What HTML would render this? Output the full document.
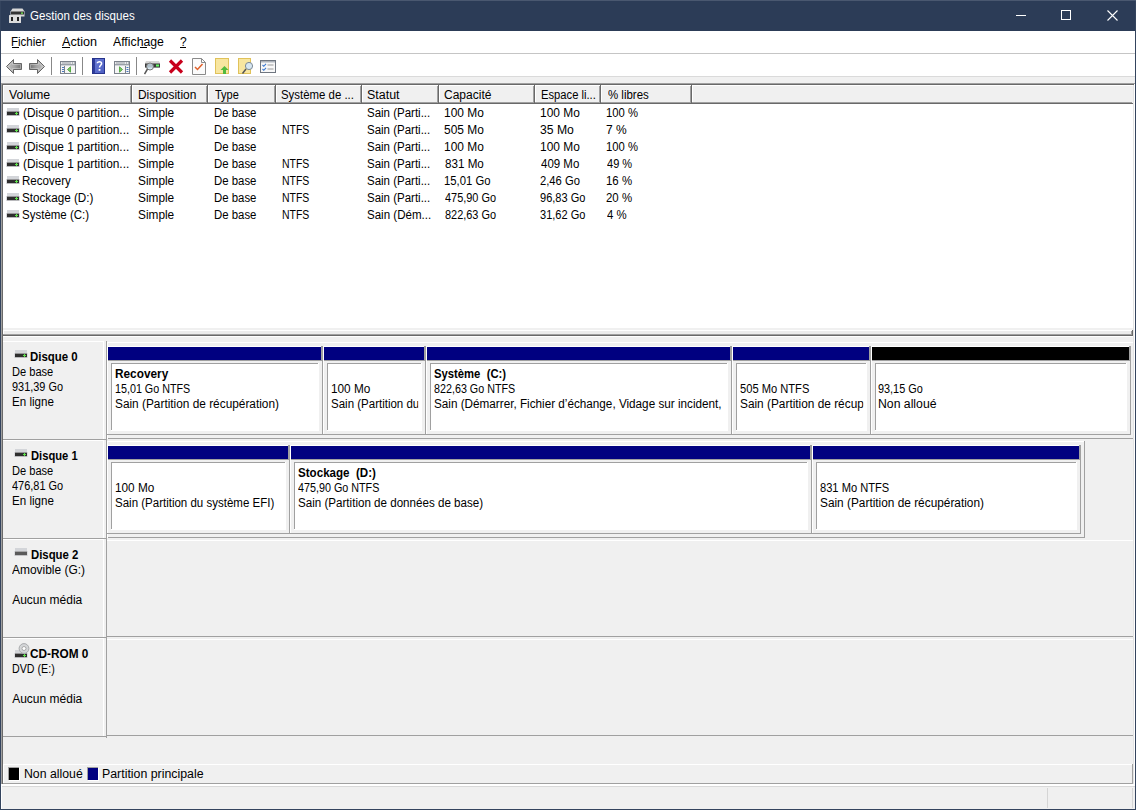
<!DOCTYPE html>
<html><head><meta charset="utf-8"><title>Gestion des disques</title>
<style>
html,body{margin:0;padding:0;}
body{width:1136px;height:810px;overflow:hidden;position:relative;background:#f0f0f0;font-family:"Liberation Sans",sans-serif;font-size:12px;}
body>div,body>svg{position:absolute;}
.t{line-height:15px;white-space:nowrap;}

</style></head><body>
<div style="left:0px;top:0px;width:1136px;height:810px;background:#f0f0f0;"></div>
<div style="left:0px;top:0px;width:1136px;height:31px;background:#2c3c57;"></div>
<div style="left:0px;top:0px;width:1136px;height:1px;background:#4a5870;"></div>
<div class="t" style="left:29.84px;top:9.10px;color:#fff;transform-origin:0 0;transform:scaleX(0.9626);">Gestion des disques</div>
<svg style="left:9px;top:8px" width="17" height="16" viewBox="0 0 17 16">
<path d="M3.5 0.5h10l2 3v5h-14v-5z" fill="#d8d8d8"/>
<rect x="2" y="3.5" width="13" height="3" fill="#333"/>
<rect x="12" y="4.5" width="2" height="1.2" fill="#7f5"/>
<rect x="0" y="7" width="12" height="8" rx="0.5" fill="#dcdcdc"/>
<rect x="2" y="9" width="2" height="4" fill="#222"/>
<rect x="8" y="9" width="2" height="4" fill="#222"/>
</svg>
<div style="left:1016px;top:15px;width:10px;height:1px;background:#fff;"></div>
<div style="left:1061px;top:10px;width:8px;height:8px;border:1px solid #fff"></div>
<svg style="left:1107px;top:10px" width="11" height="11" viewBox="0 0 11 11"><path d="M0.5 0.5L10.5 10.5M10.5 0.5L0.5 10.5" stroke="#fff" stroke-width="1.1"/></svg>
<div style="left:0px;top:0px;width:1px;height:810px;background:#34445e;"></div>
<div style="left:1135px;top:0px;width:1px;height:810px;background:#34445e;"></div>
<div style="left:0px;top:809px;width:1136px;height:1px;background:#34445e;"></div>
<div style="left:0px;top:0px;width:1136px;height:1px;background:#4a5870;"></div>
<div style="left:1px;top:31px;width:1134px;height:22px;background:#fff;"></div>
<div style="left:1px;top:53px;width:1134px;height:1px;background:#c5c5c5;"></div>
<div class="t" style="left:10.82px;top:35.30px;color:#000;transform-origin:0 0;transform:scaleX(0.9611);">Fichier</div>
<div class="t" style="left:61.90px;top:35.30px;color:#000;transform-origin:0 0;transform:scaleX(1.0515);">Action</div>
<div class="t" style="left:112.79px;top:35.30px;color:#000;transform-origin:0 0;transform:scaleX(1.0224);">Affichage</div>
<div class="t" style="left:180.00px;top:35.30px;color:#000;">?</div>
<div style="left:12px;top:47px;width:7px;height:1px;background:#000;"></div>
<div style="left:62px;top:47px;width:8px;height:1px;background:#000;"></div>
<div style="left:140px;top:47px;width:7px;height:1px;background:#000;"></div>
<div style="left:180px;top:47px;width:6px;height:1px;background:#000;"></div>
<div style="left:1px;top:54px;width:1134px;height:22px;background:#fff;"></div>
<div style="left:1px;top:76px;width:1134px;height:1px;background:#dadada;"></div>
<div style="left:51px;top:57px;width:1px;height:18px;background:#888;"></div>
<div style="left:82px;top:57px;width:1px;height:18px;background:#888;"></div>
<div style="left:136px;top:57px;width:1px;height:18px;background:#888;"></div>
<svg style="left:5px;top:58px" width="18" height="17" viewBox="0 0 18 17">
<defs><linearGradient id="ga" x1="0" y1="0" x2="1" y2="0"><stop offset="0" stop-color="#c4c4c4"/><stop offset="0.55" stop-color="#a2a2a2"/><stop offset="1" stop-color="#707070"/></linearGradient>
<linearGradient id="gb" x1="1" y1="0" x2="0" y2="0"><stop offset="0" stop-color="#c4c4c4"/><stop offset="0.55" stop-color="#a2a2a2"/><stop offset="1" stop-color="#707070"/></linearGradient></defs>
<path d="M1.5 8.5L8.5 1.5V5.5H16.5V11.5H8.5V15.5Z" fill="url(#ga)" stroke="#666" stroke-width="1"/>
<path d="M3.2 8.5L7.5 4.2V6.5H15.5V10.5H7.5V12.8Z" fill="none" stroke="#dcdcdc" stroke-width="0.6" stroke-opacity="0.8"/></svg>
<svg style="left:28px;top:58px" width="18" height="17" viewBox="0 0 18 17">
<path d="M16.5 8.5L9.5 1.5V5.5H1.5V11.5H9.5V15.5Z" fill="url(#gb)" stroke="#666" stroke-width="1"/>
<path d="M14.8 8.5L10.5 4.2V6.5H2.5V10.5H10.5V12.8Z" fill="none" stroke="#dcdcdc" stroke-width="0.6" stroke-opacity="0.8"/></svg>
<svg style="left:60px;top:61px" width="16" height="13" viewBox="0 0 16 13"><rect x="0.5" y="0.5" width="15" height="12" fill="#f6f6f6" stroke="#7d838c"/><rect x="1" y="1" width="14" height="2" fill="#e8e9eb"/><rect x="2" y="1.5" width="9" height="1" fill="#9aa0a8"/><rect x="12" y="1.5" width="1" height="1" fill="#7d838c"/><rect x="14" y="1.5" width="1" height="1" fill="#7d838c"/><line x1="1" y1="3.5" x2="15" y2="3.5" stroke="#9aa0a8"/><line x1="1" y1="4.5" x2="15" y2="4.5" stroke="#d0d3d8"/><line x1="4.5" y1="5" x2="4.5" y2="12" stroke="#7d838c"/><rect x="2" y="6" width="2" height="1" fill="#4a78c0"/><rect x="2" y="8" width="2" height="1" fill="#4a78c0"/><rect x="2" y="10" width="2" height="1" fill="#4a78c0"/><path d="M7.5 8.5L10.5 5.8V11.2Z" fill="#7cc46a" stroke="#3fa02c" stroke-width="0.8"/></svg>
<svg style="left:114px;top:61px" width="16" height="13" viewBox="0 0 16 13"><rect x="0.5" y="0.5" width="15" height="12" fill="#f6f6f6" stroke="#7d838c"/><rect x="1" y="1" width="14" height="2" fill="#e8e9eb"/><rect x="2" y="1.5" width="9" height="1" fill="#9aa0a8"/><rect x="12" y="1.5" width="1" height="1" fill="#7d838c"/><rect x="14" y="1.5" width="1" height="1" fill="#7d838c"/><line x1="1" y1="3.5" x2="15" y2="3.5" stroke="#9aa0a8"/><line x1="1" y1="4.5" x2="15" y2="4.5" stroke="#d0d3d8"/><line x1="11.5" y1="5" x2="11.5" y2="12" stroke="#7d838c"/><rect x="12.5" y="6" width="2" height="1" fill="#4a78c0"/><rect x="12.5" y="8" width="2" height="1" fill="#4a78c0"/><rect x="12.5" y="10" width="2" height="1" fill="#4a78c0"/><path d="M8.5 8.5L5.5 5.8V11.2Z" fill="#7cc46a" stroke="#3fa02c" stroke-width="0.8"/></svg>
<svg style="left:92px;top:58px" width="13" height="16" viewBox="0 0 13 16">
<defs><linearGradient id="gh" x1="0" y1="0" x2="1" y2="1"><stop offset="0" stop-color="#6d7fd8"/><stop offset="1" stop-color="#4a5cc0"/></linearGradient></defs>
<rect x="0" y="0" width="13" height="16" fill="url(#gh)"/><rect x="0" y="0" width="3" height="16" fill="#2e3c9a"/><rect x="0.5" y="0.5" width="12" height="15" fill="none" stroke="#26338c"/>
<path d="M5.3 5.2C5.3 3.2 9.6 3.2 9.6 5.4C9.6 7.2 7.5 7.4 7.5 9.6" fill="none" stroke="#fff" stroke-width="1.5"/><rect x="6.6" y="11" width="1.8" height="1.8" fill="#fff"/></svg>
<svg style="left:144px;top:60px" width="17" height="15" viewBox="0 0 17 15">
<path d="M2 1h13l1 2v5h-15v-5z" fill="#d6d6d6"/><rect x="1" y="3.5" width="15" height="4" fill="#3a3a3a"/><rect x="12" y="4.5" width="3" height="2" fill="#6f6"/>
<circle cx="6" cy="6.5" r="3.5" fill="#cfe3f0" fill-opacity="0.8" stroke="#777" stroke-width="1"/><path d="M3.5 9L0.5 14" stroke="#555" stroke-width="1.5"/></svg>
<svg style="left:168px;top:59px" width="16" height="15" viewBox="0 0 16 15"><path d="M2 1.5L14 13.5M14 1.5L2 13.5" stroke="#c8001c" stroke-width="3.2"/></svg>
<svg style="left:192px;top:58px" width="14" height="17" viewBox="0 0 14 17"><path d="M0.5 0.5H9.5L13.5 4.5V16.5H0.5Z" fill="#fbfbfb" stroke="#8a8a8a"/><path d="M9.5 0.5V4.5H13.5" fill="none" stroke="#8a8a8a"/><path d="M3 9L5.5 11.5L10.5 6" fill="none" stroke="#e0602a" stroke-width="1.5"/></svg>
<svg style="left:215px;top:58px" width="15" height="17" viewBox="0 0 15 17"><rect x="0.5" y="0.5" width="13" height="15" fill="#f8e6a0" stroke="#e0c25a"/><path d="M9.5 8L13.5 12H11V16H8V12H5.5Z" fill="#52ba3e"/></svg>
<svg style="left:238px;top:58px" width="16" height="17" viewBox="0 0 16 17"><rect x="0.5" y="0.5" width="12" height="15" fill="#f8e6a0" stroke="#e0c25a"/><circle cx="11" cy="8" r="3.6" fill="#d6e6f2" stroke="#7d8a96" stroke-width="1"/><path d="M8 11L4.5 15.5" stroke="#555" stroke-width="1.5"/></svg>
<svg style="left:260px;top:60px" width="16" height="13" viewBox="0 0 16 13"><rect x="0.5" y="0.5" width="15" height="12" fill="#f8f8f8" stroke="#6f7680"/><rect x="1" y="1" width="14" height="1.5" fill="#aeb4bc"/>
<path d="M2.5 5L3.8 6.3L6 3.8M2.5 9L3.8 10.3L6 7.8" fill="none" stroke="#3a78d0" stroke-width="1.1"/><rect x="7.5" y="4.5" width="6" height="1" fill="#999"/><rect x="7.5" y="8.5" width="6" height="1" fill="#999"/></svg>
<div style="left:1px;top:83px;width:1px;height:702px;background:#a0a0a0;"></div>
<div style="left:2px;top:84px;width:1px;height:700px;background:#696969;"></div>
<div style="left:1134px;top:83px;width:1px;height:702px;background:#fff;"></div>
<div style="left:1133px;top:84px;width:1px;height:700px;background:#e3e3e3;"></div>
<div style="left:1px;top:83px;width:1134px;height:1px;background:#a0a0a0;"></div>
<div style="left:2px;top:84px;width:1132px;height:1px;background:#696969;"></div>
<div style="left:3px;top:85px;width:1130px;height:243px;background:#fff;"></div>
<div style="left:3px;top:85px;width:129px;height:19px;background:#f0f0f0;"></div>
<div style="left:3px;top:85px;width:129px;height:1px;background:#fff;"></div>
<div style="left:3px;top:85px;width:1px;height:19px;background:#fff;"></div>
<div style="left:130px;top:86px;width:1px;height:17px;background:#a0a0a0;"></div>
<div style="left:131px;top:85px;width:1px;height:19px;background:#696969;"></div>
<div style="left:3px;top:102px;width:128px;height:1px;background:#a0a0a0;"></div>
<div style="left:3px;top:103px;width:129px;height:1px;background:#696969;"></div>
<div style="left:132px;top:85px;width:76px;height:19px;background:#f0f0f0;"></div>
<div style="left:132px;top:85px;width:76px;height:1px;background:#fff;"></div>
<div style="left:132px;top:85px;width:1px;height:19px;background:#fff;"></div>
<div style="left:206px;top:86px;width:1px;height:17px;background:#a0a0a0;"></div>
<div style="left:207px;top:85px;width:1px;height:19px;background:#696969;"></div>
<div style="left:132px;top:102px;width:75px;height:1px;background:#a0a0a0;"></div>
<div style="left:132px;top:103px;width:76px;height:1px;background:#696969;"></div>
<div style="left:208px;top:85px;width:68px;height:19px;background:#f0f0f0;"></div>
<div style="left:208px;top:85px;width:68px;height:1px;background:#fff;"></div>
<div style="left:208px;top:85px;width:1px;height:19px;background:#fff;"></div>
<div style="left:274px;top:86px;width:1px;height:17px;background:#a0a0a0;"></div>
<div style="left:275px;top:85px;width:1px;height:19px;background:#696969;"></div>
<div style="left:208px;top:102px;width:67px;height:1px;background:#a0a0a0;"></div>
<div style="left:208px;top:103px;width:68px;height:1px;background:#696969;"></div>
<div style="left:276px;top:85px;width:86px;height:19px;background:#f0f0f0;"></div>
<div style="left:276px;top:85px;width:86px;height:1px;background:#fff;"></div>
<div style="left:276px;top:85px;width:1px;height:19px;background:#fff;"></div>
<div style="left:360px;top:86px;width:1px;height:17px;background:#a0a0a0;"></div>
<div style="left:361px;top:85px;width:1px;height:19px;background:#696969;"></div>
<div style="left:276px;top:102px;width:85px;height:1px;background:#a0a0a0;"></div>
<div style="left:276px;top:103px;width:86px;height:1px;background:#696969;"></div>
<div style="left:362px;top:85px;width:77px;height:19px;background:#f0f0f0;"></div>
<div style="left:362px;top:85px;width:77px;height:1px;background:#fff;"></div>
<div style="left:362px;top:85px;width:1px;height:19px;background:#fff;"></div>
<div style="left:437px;top:86px;width:1px;height:17px;background:#a0a0a0;"></div>
<div style="left:438px;top:85px;width:1px;height:19px;background:#696969;"></div>
<div style="left:362px;top:102px;width:76px;height:1px;background:#a0a0a0;"></div>
<div style="left:362px;top:103px;width:77px;height:1px;background:#696969;"></div>
<div style="left:439px;top:85px;width:96px;height:19px;background:#f0f0f0;"></div>
<div style="left:439px;top:85px;width:96px;height:1px;background:#fff;"></div>
<div style="left:439px;top:85px;width:1px;height:19px;background:#fff;"></div>
<div style="left:533px;top:86px;width:1px;height:17px;background:#a0a0a0;"></div>
<div style="left:534px;top:85px;width:1px;height:19px;background:#696969;"></div>
<div style="left:439px;top:102px;width:95px;height:1px;background:#a0a0a0;"></div>
<div style="left:439px;top:103px;width:96px;height:1px;background:#696969;"></div>
<div style="left:535px;top:85px;width:66px;height:19px;background:#f0f0f0;"></div>
<div style="left:535px;top:85px;width:66px;height:1px;background:#fff;"></div>
<div style="left:535px;top:85px;width:1px;height:19px;background:#fff;"></div>
<div style="left:599px;top:86px;width:1px;height:17px;background:#a0a0a0;"></div>
<div style="left:600px;top:85px;width:1px;height:19px;background:#696969;"></div>
<div style="left:535px;top:102px;width:65px;height:1px;background:#a0a0a0;"></div>
<div style="left:535px;top:103px;width:66px;height:1px;background:#696969;"></div>
<div style="left:601px;top:85px;width:91px;height:19px;background:#f0f0f0;"></div>
<div style="left:601px;top:85px;width:91px;height:1px;background:#fff;"></div>
<div style="left:601px;top:85px;width:1px;height:19px;background:#fff;"></div>
<div style="left:690px;top:86px;width:1px;height:17px;background:#a0a0a0;"></div>
<div style="left:691px;top:85px;width:1px;height:19px;background:#696969;"></div>
<div style="left:601px;top:102px;width:90px;height:1px;background:#a0a0a0;"></div>
<div style="left:601px;top:103px;width:91px;height:1px;background:#696969;"></div>
<div style="left:692px;top:85px;width:441px;height:19px;background:#f0f0f0;"></div>
<div style="left:692px;top:85px;width:441px;height:1px;background:#fff;"></div>
<div style="left:692px;top:85px;width:1px;height:19px;background:#fff;"></div>
<div style="left:692px;top:102px;width:440px;height:1px;background:#a0a0a0;"></div>
<div style="left:692px;top:103px;width:441px;height:1px;background:#696969;"></div>
<div class="t" style="left:8.70px;top:88.10px;color:#000;transform-origin:0 0;transform:scaleX(1.0300);">Volume</div>
<div class="t" style="left:138.00px;top:88.10px;color:#000;transform-origin:0 0;transform:scaleX(0.9931);">Disposition</div>
<div class="t" style="left:215.00px;top:88.10px;color:#000;transform-origin:0 0;transform:scaleX(0.9154);">Type</div>
<div class="t" style="left:281.45px;top:88.10px;color:#000;transform-origin:0 0;transform:scaleX(0.9507);">Système de ...</div>
<div class="t" style="left:366.96px;top:88.10px;color:#000;transform-origin:0 0;transform:scaleX(1.0367);">Statut</div>
<div class="t" style="left:444.20px;top:88.10px;color:#000;transform-origin:0 0;transform:scaleX(1.0022);">Capacité</div>
<div class="t" style="left:540.67px;top:88.10px;color:#000;transform-origin:0 0;transform:scaleX(0.9333);">Espace li...</div>
<div class="t" style="left:607.50px;top:88.10px;color:#000;transform-origin:0 0;transform:scaleX(0.9548);">% libres</div>
<svg style="left:6px;top:108px" width="14" height="8" viewBox="0 0 14 8"><rect x="1" y="0" width="12" height="3" fill="#d3d5d9"/><rect x="0" y="3" width="14" height="5" fill="#dcdde0"/><rect x="1" y="3.6" width="12" height="3.6" fill="#2e2e2e"/><rect x="9" y="5" width="3" height="1" fill="#5ee04a"/><rect x="10" y="4" width="1" height="3" fill="#5ee04a"/></svg>
<div class="t" style="left:23.20px;top:106.10px;color:#000;transform-origin:0 0;transform:scaleX(0.9896);">(Disque 0 partition...</div>
<div class="t" style="left:138.01px;top:106.10px;color:#000;transform-origin:0 0;transform:scaleX(0.9861);">Simple</div>
<div class="t" style="left:213.55px;top:106.10px;color:#000;transform-origin:0 0;transform:scaleX(0.9488);">De base</div>
<div class="t" style="left:367.14px;top:106.10px;color:#000;transform-origin:0 0;transform:scaleX(0.9578);">Sain (Parti...</div>
<div class="t" style="left:443.81px;top:106.10px;color:#000;transform-origin:0 0;transform:scaleX(0.9949);">100 Mo</div>
<div class="t" style="left:540.11px;top:106.10px;color:#000;transform-origin:0 0;transform:scaleX(0.9949);">100 Mo</div>
<div class="t" style="left:605.96px;top:106.10px;color:#000;transform-origin:0 0;transform:scaleX(0.9394);">100 %</div>
<svg style="left:6px;top:125px" width="14" height="8" viewBox="0 0 14 8"><rect x="1" y="0" width="12" height="3" fill="#d3d5d9"/><rect x="0" y="3" width="14" height="5" fill="#dcdde0"/><rect x="1" y="3.6" width="12" height="3.6" fill="#2e2e2e"/><rect x="9" y="5" width="3" height="1" fill="#5ee04a"/><rect x="10" y="4" width="1" height="3" fill="#5ee04a"/></svg>
<div class="t" style="left:23.20px;top:123.10px;color:#000;transform-origin:0 0;transform:scaleX(0.9896);">(Disque 0 partition...</div>
<div class="t" style="left:138.01px;top:123.10px;color:#000;transform-origin:0 0;transform:scaleX(0.9861);">Simple</div>
<div class="t" style="left:213.55px;top:123.10px;color:#000;transform-origin:0 0;transform:scaleX(0.9488);">De base</div>
<div class="t" style="left:281.93px;top:123.10px;color:#000;transform-origin:0 0;transform:scaleX(0.8733);">NTFS</div>
<div class="t" style="left:367.14px;top:123.10px;color:#000;transform-origin:0 0;transform:scaleX(0.9578);">Sain (Parti...</div>
<div class="t" style="left:443.81px;top:123.10px;color:#000;transform-origin:0 0;transform:scaleX(0.9949);">505 Mo</div>
<div class="t" style="left:540.08px;top:123.10px;color:#000;transform-origin:0 0;transform:scaleX(1.0156);">35 Mo</div>
<div class="t" style="left:605.90px;top:123.10px;color:#000;transform-origin:0 0;transform:scaleX(1.0000);">7 %</div>
<svg style="left:6px;top:142px" width="14" height="8" viewBox="0 0 14 8"><rect x="1" y="0" width="12" height="3" fill="#d3d5d9"/><rect x="0" y="3" width="14" height="5" fill="#dcdde0"/><rect x="1" y="3.6" width="12" height="3.6" fill="#2e2e2e"/><rect x="9" y="5" width="3" height="1" fill="#5ee04a"/><rect x="10" y="4" width="1" height="3" fill="#5ee04a"/></svg>
<div class="t" style="left:23.20px;top:140.10px;color:#000;transform-origin:0 0;transform:scaleX(0.9896);">(Disque 1 partition...</div>
<div class="t" style="left:138.01px;top:140.10px;color:#000;transform-origin:0 0;transform:scaleX(0.9861);">Simple</div>
<div class="t" style="left:213.55px;top:140.10px;color:#000;transform-origin:0 0;transform:scaleX(0.9488);">De base</div>
<div class="t" style="left:367.14px;top:140.10px;color:#000;transform-origin:0 0;transform:scaleX(0.9578);">Sain (Parti...</div>
<div class="t" style="left:443.81px;top:140.10px;color:#000;transform-origin:0 0;transform:scaleX(0.9949);">100 Mo</div>
<div class="t" style="left:540.11px;top:140.10px;color:#000;transform-origin:0 0;transform:scaleX(0.9949);">100 Mo</div>
<div class="t" style="left:605.96px;top:140.10px;color:#000;transform-origin:0 0;transform:scaleX(0.9394);">100 %</div>
<svg style="left:6px;top:159px" width="14" height="8" viewBox="0 0 14 8"><rect x="1" y="0" width="12" height="3" fill="#d3d5d9"/><rect x="0" y="3" width="14" height="5" fill="#dcdde0"/><rect x="1" y="3.6" width="12" height="3.6" fill="#2e2e2e"/><rect x="9" y="5" width="3" height="1" fill="#5ee04a"/><rect x="10" y="4" width="1" height="3" fill="#5ee04a"/></svg>
<div class="t" style="left:23.20px;top:157.10px;color:#000;transform-origin:0 0;transform:scaleX(0.9896);">(Disque 1 partition...</div>
<div class="t" style="left:138.01px;top:157.10px;color:#000;transform-origin:0 0;transform:scaleX(0.9861);">Simple</div>
<div class="t" style="left:213.55px;top:157.10px;color:#000;transform-origin:0 0;transform:scaleX(0.9488);">De base</div>
<div class="t" style="left:281.93px;top:157.10px;color:#000;transform-origin:0 0;transform:scaleX(0.8733);">NTFS</div>
<div class="t" style="left:367.14px;top:157.10px;color:#000;transform-origin:0 0;transform:scaleX(0.9578);">Sain (Parti...</div>
<div class="t" style="left:444.80px;top:157.10px;color:#000;transform-origin:0 0;transform:scaleX(0.9700);">831 Mo</div>
<div class="t" style="left:541.10px;top:157.10px;color:#000;transform-origin:0 0;transform:scaleX(0.9575);">409 Mo</div>
<div class="t" style="left:606.90px;top:157.10px;color:#000;transform-origin:0 0;transform:scaleX(0.9185);">49 %</div>
<svg style="left:6px;top:176px" width="14" height="8" viewBox="0 0 14 8"><rect x="1" y="0" width="12" height="3" fill="#d3d5d9"/><rect x="0" y="3" width="14" height="5" fill="#dcdde0"/><rect x="1" y="3.6" width="12" height="3.6" fill="#2e2e2e"/><rect x="9" y="5" width="3" height="1" fill="#5ee04a"/><rect x="10" y="4" width="1" height="3" fill="#5ee04a"/></svg>
<div class="t" style="left:22.25px;top:174.10px;color:#000;transform-origin:0 0;transform:scaleX(0.9633);">Recovery</div>
<div class="t" style="left:138.01px;top:174.10px;color:#000;transform-origin:0 0;transform:scaleX(0.9861);">Simple</div>
<div class="t" style="left:213.55px;top:174.10px;color:#000;transform-origin:0 0;transform:scaleX(0.9488);">De base</div>
<div class="t" style="left:281.93px;top:174.10px;color:#000;transform-origin:0 0;transform:scaleX(0.8733);">NTFS</div>
<div class="t" style="left:367.14px;top:174.10px;color:#000;transform-origin:0 0;transform:scaleX(0.9578);">Sain (Parti...</div>
<div class="t" style="left:443.86px;top:174.10px;color:#000;transform-origin:0 0;transform:scaleX(0.9417);">15,01 Go</div>
<div class="t" style="left:540.17px;top:174.10px;color:#000;transform-origin:0 0;transform:scaleX(0.9341);">2,46 Go</div>
<div class="t" style="left:605.95px;top:174.10px;color:#000;transform-origin:0 0;transform:scaleX(0.9538);">16 %</div>
<svg style="left:6px;top:193px" width="14" height="8" viewBox="0 0 14 8"><rect x="1" y="0" width="12" height="3" fill="#d3d5d9"/><rect x="0" y="3" width="14" height="5" fill="#dcdde0"/><rect x="1" y="3.6" width="12" height="3.6" fill="#2e2e2e"/><rect x="9" y="5" width="3" height="1" fill="#5ee04a"/><rect x="10" y="4" width="1" height="3" fill="#5ee04a"/></svg>
<div class="t" style="left:22.23px;top:191.10px;color:#000;transform-origin:0 0;transform:scaleX(0.9732);">Stockage (D:)</div>
<div class="t" style="left:138.01px;top:191.10px;color:#000;transform-origin:0 0;transform:scaleX(0.9861);">Simple</div>
<div class="t" style="left:213.55px;top:191.10px;color:#000;transform-origin:0 0;transform:scaleX(0.9488);">De base</div>
<div class="t" style="left:281.93px;top:191.10px;color:#000;transform-origin:0 0;transform:scaleX(0.8733);">NTFS</div>
<div class="t" style="left:367.14px;top:191.10px;color:#000;transform-origin:0 0;transform:scaleX(0.9578);">Sain (Parti...</div>
<div class="t" style="left:444.80px;top:191.10px;color:#000;transform-origin:0 0;transform:scaleX(0.9107);">475,90 Go</div>
<div class="t" style="left:540.18px;top:191.10px;color:#000;transform-origin:0 0;transform:scaleX(0.9188);">96,83 Go</div>
<div class="t" style="left:605.95px;top:191.10px;color:#000;transform-origin:0 0;transform:scaleX(0.9538);">20 %</div>
<svg style="left:6px;top:210px" width="14" height="8" viewBox="0 0 14 8"><rect x="1" y="0" width="12" height="3" fill="#d3d5d9"/><rect x="0" y="3" width="14" height="5" fill="#dcdde0"/><rect x="1" y="3.6" width="12" height="3.6" fill="#2e2e2e"/><rect x="9" y="5" width="3" height="1" fill="#5ee04a"/><rect x="10" y="4" width="1" height="3" fill="#5ee04a"/></svg>
<div class="t" style="left:22.25px;top:208.10px;color:#000;transform-origin:0 0;transform:scaleX(0.9588);">Système (C:)</div>
<div class="t" style="left:138.01px;top:208.10px;color:#000;transform-origin:0 0;transform:scaleX(0.9861);">Simple</div>
<div class="t" style="left:213.55px;top:208.10px;color:#000;transform-origin:0 0;transform:scaleX(0.9488);">De base</div>
<div class="t" style="left:281.93px;top:208.10px;color:#000;transform-origin:0 0;transform:scaleX(0.8733);">NTFS</div>
<div class="t" style="left:367.14px;top:208.10px;color:#000;transform-origin:0 0;transform:scaleX(0.9615);">Sain (Dém...</div>
<div class="t" style="left:444.80px;top:208.10px;color:#000;transform-origin:0 0;transform:scaleX(0.9107);">822,63 Go</div>
<div class="t" style="left:540.18px;top:208.10px;color:#000;transform-origin:0 0;transform:scaleX(0.9188);">31,62 Go</div>
<div class="t" style="left:606.90px;top:208.10px;color:#000;transform-origin:0 0;transform:scaleX(0.9500);">4 %</div>
<div style="left:3px;top:328px;width:1130px;height:1px;background:#f0f0f0;"></div>
<div style="left:3px;top:329px;width:1130px;height:1px;background:#f0f0f0;"></div>
<div style="left:3px;top:330px;width:1130px;height:6px;background:#ececec;"></div>
<div style="left:3px;top:330px;width:1129px;height:1px;background:#fff;"></div>
<div style="left:3px;top:330px;width:1px;height:6px;background:#fff;"></div>
<div style="left:3px;top:334px;width:1130px;height:1px;background:#a0a0a0;"></div>
<div style="left:3px;top:335px;width:1130px;height:1px;background:#696969;"></div>
<div style="left:1132px;top:330px;width:1px;height:6px;background:#696969;"></div>
<div style="left:1131px;top:331px;width:1px;height:4px;background:#a0a0a0;"></div>
<div style="left:3px;top:336px;width:1130px;height:1px;background:#fff;"></div>
<div style="left:3px;top:341px;width:100px;height:1px;background:#fff;"></div>
<div style="left:103px;top:341px;width:1px;height:98px;background:#fff;"></div>
<div style="left:106px;top:341px;width:1px;height:100px;background:#a0a0a0;"></div>
<div style="left:3px;top:439px;width:103px;height:1px;background:#a0a0a0;"></div>
<div style="left:107px;top:342px;width:1026px;height:1px;background:#fff;"></div>
<div style="left:107px;top:438px;width:1026px;height:1px;background:#a0a0a0;"></div>
<svg style="left:14px;top:350px" width="14" height="8" viewBox="0 0 14 8"><rect x="1" y="0" width="12" height="3" fill="#d3d5d9"/><rect x="0" y="3" width="14" height="5" fill="#dcdde0"/><rect x="1" y="3.6" width="12" height="3.6" fill="#2e2e2e"/><rect x="9" y="5" width="3" height="1" fill="#5ee04a"/><rect x="10" y="4" width="1" height="3" fill="#5ee04a"/></svg>
<div class="t" style="left:30.02px;top:349.90px;color:#000;font-weight:bold;transform-origin:0 0;transform:scaleX(0.9531);">Disque 0</div>
<div class="t" style="left:12.23px;top:364.90px;color:#000;transform-origin:0 0;transform:scaleX(0.9227);">De base</div>
<div class="t" style="left:12.24px;top:379.90px;color:#000;transform-origin:0 0;transform:scaleX(0.9091);">931,39 Go</div>
<div class="t" style="left:12.21px;top:394.90px;color:#000;transform-origin:0 0;transform:scaleX(0.9651);">En ligne</div>
<div style="left:3px;top:440px;width:100px;height:1px;background:#fff;"></div>
<div style="left:103px;top:440px;width:1px;height:98px;background:#fff;"></div>
<div style="left:106px;top:440px;width:1px;height:100px;background:#a0a0a0;"></div>
<div style="left:3px;top:538px;width:103px;height:1px;background:#a0a0a0;"></div>
<div style="left:107px;top:441px;width:1026px;height:1px;background:#fff;"></div>
<div style="left:107px;top:537px;width:1026px;height:1px;background:#a0a0a0;"></div>
<svg style="left:14px;top:449px" width="14" height="8" viewBox="0 0 14 8"><rect x="1" y="0" width="12" height="3" fill="#d3d5d9"/><rect x="0" y="3" width="14" height="5" fill="#dcdde0"/><rect x="1" y="3.6" width="12" height="3.6" fill="#2e2e2e"/><rect x="9" y="5" width="3" height="1" fill="#5ee04a"/><rect x="10" y="4" width="1" height="3" fill="#5ee04a"/></svg>
<div class="t" style="left:30.53px;top:448.90px;color:#000;font-weight:bold;transform-origin:0 0;transform:scaleX(0.9327);">Disque 1</div>
<div class="t" style="left:12.23px;top:463.90px;color:#000;transform-origin:0 0;transform:scaleX(0.9227);">De base</div>
<div class="t" style="left:12.23px;top:478.90px;color:#000;transform-origin:0 0;transform:scaleX(0.9127);">476,81 Go</div>
<div class="t" style="left:12.21px;top:493.90px;color:#000;transform-origin:0 0;transform:scaleX(0.9651);">En ligne</div>
<div style="left:3px;top:539px;width:100px;height:1px;background:#fff;"></div>
<div style="left:103px;top:539px;width:1px;height:98px;background:#fff;"></div>
<div style="left:106px;top:539px;width:1px;height:100px;background:#a0a0a0;"></div>
<div style="left:3px;top:637px;width:103px;height:1px;background:#a0a0a0;"></div>
<div style="left:107px;top:540px;width:1026px;height:1px;background:#fff;"></div>
<div style="left:107px;top:636px;width:1026px;height:1px;background:#a0a0a0;"></div>
<svg style="left:14px;top:548px" width="14" height="8" viewBox="0 0 14 8"><rect x="1" y="0" width="12" height="3" fill="#d3d5d9"/><rect x="0" y="3" width="14" height="5" fill="#dcdde0"/><rect x="1" y="3.6" width="12" height="3.6" fill="#5a5a5a"/></svg>
<div class="t" style="left:30.53px;top:547.90px;color:#000;font-weight:bold;transform-origin:0 0;transform:scaleX(0.9469);">Disque 2</div>
<div class="t" style="left:12.20px;top:562.90px;color:#000;transform-origin:0 0;transform:scaleX(0.9958);">Amovible (G:)</div>
<div class="t" style="left:12.20px;top:592.90px;color:#000;transform-origin:0 0;transform:scaleX(1.0000);">Aucun média</div>
<div style="left:3px;top:638px;width:100px;height:1px;background:#fff;"></div>
<div style="left:103px;top:638px;width:1px;height:98px;background:#fff;"></div>
<div style="left:106px;top:638px;width:1px;height:100px;background:#a0a0a0;"></div>
<div style="left:3px;top:736px;width:103px;height:1px;background:#a0a0a0;"></div>
<div style="left:107px;top:639px;width:1026px;height:1px;background:#fff;"></div>
<div style="left:107px;top:735px;width:1026px;height:1px;background:#a0a0a0;"></div>
<svg style="left:14px;top:650px" width="14" height="8" viewBox="0 0 14 8"><rect x="1" y="0" width="12" height="3" fill="#d3d5d9"/><rect x="0" y="3" width="14" height="5" fill="#dcdde0"/><rect x="1" y="3.6" width="12" height="3.6" fill="#2e2e2e"/><rect x="9" y="5" width="3" height="1" fill="#5ee04a"/><rect x="10" y="4" width="1" height="3" fill="#5ee04a"/></svg>
<svg style="left:18px;top:643px" width="12" height="11" viewBox="0 0 12 11"><circle cx="6" cy="5.5" r="4.9" fill="#d4d6d8" stroke="#a9abad" stroke-width="1"/><circle cx="6" cy="5.5" r="2" fill="#fff" stroke="#9a9a9a" stroke-width="0.8"/></svg>
<div class="t" style="left:30.01px;top:646.90px;color:#000;font-weight:bold;transform-origin:0 0;transform:scaleX(0.9847);">CD-ROM 0</div>
<div class="t" style="left:12.24px;top:661.90px;color:#000;transform-origin:0 0;transform:scaleX(0.8894);">DVD (E:)</div>
<div class="t" style="left:12.20px;top:691.90px;color:#000;transform-origin:0 0;transform:scaleX(1.0000);">Aucun média</div>
<div style="left:107px;top:342px;width:1px;height:97px;background:#fff;"></div>
<div style="left:107px;top:441px;width:1px;height:97px;background:#fff;"></div>
<div style="left:1084px;top:441px;width:1px;height:97px;background:#a0a0a0;"></div>
<div style="left:1085px;top:537px;width:48px;height:1px;background:#f0f0f0;"></div>
<div style="left:1085px;top:441px;width:48px;height:1px;background:#f0f0f0;"></div>
<div style="left:107px;top:346px;width:215px;height:1px;background:#fff;"></div>
<div style="left:107px;top:346px;width:1px;height:88px;background:#fff;"></div>
<div style="left:108px;top:347px;width:213px;height:13px;background:#000080;"></div>
<div style="left:321px;top:346px;width:1px;height:15px;background:#a0a0a0;"></div>
<div style="left:108px;top:360px;width:214px;height:1px;background:#a0a0a0;"></div>
<div style="left:322px;top:346px;width:1px;height:89px;background:#a0a0a0;"></div>
<div style="left:107px;top:434px;width:216px;height:1px;background:#a0a0a0;"></div>
<div style="left:111px;top:363px;width:208px;height:68px;background:#fff;"></div>
<div style="left:111px;top:363px;width:207px;height:1px;background:#a0a0a0;"></div>
<div style="left:111px;top:363px;width:1px;height:67px;background:#a0a0a0;"></div>
<div class="t" style="left:114.91px;top:366.90px;color:#000;font-weight:bold;transform-origin:0 0;transform:scaleX(0.9849);width:203.1px;overflow:hidden;">Recovery</div>
<div class="t" style="left:114.95px;top:381.90px;color:#000;transform-origin:0 0;transform:scaleX(0.8952);width:223.4px;overflow:hidden;">15,01 Go NTFS</div>
<div class="t" style="left:114.91px;top:396.90px;color:#000;transform-origin:0 0;transform:scaleX(0.9873);width:202.6px;overflow:hidden;">Sain (Partition de récupération)</div>
<div style="left:323px;top:346px;width:102px;height:1px;background:#fff;"></div>
<div style="left:323px;top:346px;width:1px;height:88px;background:#fff;"></div>
<div style="left:324px;top:347px;width:100px;height:13px;background:#000080;"></div>
<div style="left:424px;top:346px;width:1px;height:15px;background:#a0a0a0;"></div>
<div style="left:324px;top:360px;width:101px;height:1px;background:#a0a0a0;"></div>
<div style="left:425px;top:346px;width:1px;height:89px;background:#a0a0a0;"></div>
<div style="left:323px;top:434px;width:103px;height:1px;background:#a0a0a0;"></div>
<div style="left:327px;top:363px;width:95px;height:68px;background:#fff;"></div>
<div style="left:327px;top:363px;width:94px;height:1px;background:#a0a0a0;"></div>
<div style="left:327px;top:363px;width:1px;height:67px;background:#a0a0a0;"></div>
<div class="t" style="left:331.01px;top:381.90px;color:#000;transform-origin:0 0;transform:scaleX(0.9821);width:88.6px;overflow:hidden;">100 Mo</div>
<div class="t" style="left:331.02px;top:396.90px;color:#000;transform-origin:0 0;transform:scaleX(0.9588);width:90.7px;overflow:hidden;">Sain (Partition du système EFI)</div>
<div style="left:426px;top:346px;width:305px;height:1px;background:#fff;"></div>
<div style="left:426px;top:346px;width:1px;height:88px;background:#fff;"></div>
<div style="left:427px;top:347px;width:303px;height:13px;background:#000080;"></div>
<div style="left:730px;top:346px;width:1px;height:15px;background:#a0a0a0;"></div>
<div style="left:427px;top:360px;width:304px;height:1px;background:#a0a0a0;"></div>
<div style="left:731px;top:346px;width:1px;height:89px;background:#a0a0a0;"></div>
<div style="left:426px;top:434px;width:306px;height:1px;background:#a0a0a0;"></div>
<div style="left:430px;top:363px;width:298px;height:68px;background:#fff;"></div>
<div style="left:430px;top:363px;width:297px;height:1px;background:#a0a0a0;"></div>
<div style="left:430px;top:363px;width:1px;height:67px;background:#a0a0a0;"></div>
<div class="t" style="left:433.73px;top:366.90px;color:#000;font-weight:bold;transform-origin:0 0;transform:scaleX(0.9395);width:308.7px;overflow:hidden;">Système&nbsp; (C:)</div>
<div class="t" style="left:433.75px;top:381.90px;color:#000;transform-origin:0 0;transform:scaleX(0.8956);width:323.8px;overflow:hidden;">822,63 Go NTFS</div>
<div class="t" style="left:433.71px;top:396.90px;color:#000;transform-origin:0 0;transform:scaleX(0.9761);width:297.1px;overflow:hidden;">Sain (Démarrer, Fichier d’échange, Vidage sur incident,</div>
<div style="left:732px;top:346px;width:138px;height:1px;background:#fff;"></div>
<div style="left:732px;top:346px;width:1px;height:88px;background:#fff;"></div>
<div style="left:733px;top:347px;width:136px;height:13px;background:#000080;"></div>
<div style="left:869px;top:346px;width:1px;height:15px;background:#a0a0a0;"></div>
<div style="left:733px;top:360px;width:137px;height:1px;background:#a0a0a0;"></div>
<div style="left:870px;top:346px;width:1px;height:89px;background:#a0a0a0;"></div>
<div style="left:732px;top:434px;width:139px;height:1px;background:#a0a0a0;"></div>
<div style="left:736px;top:363px;width:131px;height:68px;background:#fff;"></div>
<div style="left:736px;top:363px;width:130px;height:1px;background:#a0a0a0;"></div>
<div style="left:736px;top:363px;width:1px;height:67px;background:#a0a0a0;"></div>
<div class="t" style="left:739.54px;top:381.90px;color:#000;transform-origin:0 0;transform:scaleX(0.9284);width:132.5px;overflow:hidden;">505 Mo NTFS</div>
<div class="t" style="left:739.51px;top:396.90px;color:#000;transform-origin:0 0;transform:scaleX(0.9873);width:124.6px;overflow:hidden;">Sain (Partition de récupération)</div>
<div style="left:871px;top:346px;width:259px;height:1px;background:#fff;"></div>
<div style="left:871px;top:346px;width:1px;height:88px;background:#fff;"></div>
<div style="left:872px;top:347px;width:257px;height:13px;background:#000;"></div>
<div style="left:1129px;top:346px;width:1px;height:15px;background:#a0a0a0;"></div>
<div style="left:872px;top:360px;width:258px;height:1px;background:#a0a0a0;"></div>
<div style="left:1130px;top:346px;width:1px;height:89px;background:#a0a0a0;"></div>
<div style="left:871px;top:434px;width:260px;height:1px;background:#a0a0a0;"></div>
<div style="left:875px;top:363px;width:252px;height:68px;background:#fff;"></div>
<div style="left:875px;top:363px;width:251px;height:1px;background:#a0a0a0;"></div>
<div style="left:875px;top:363px;width:1px;height:67px;background:#a0a0a0;"></div>
<div class="t" style="left:878.25px;top:381.90px;color:#000;transform-origin:0 0;transform:scaleX(0.9061);width:269.3px;overflow:hidden;">93,15 Go</div>
<div class="t" style="left:878.19px;top:396.90px;color:#000;transform-origin:0 0;transform:scaleX(1.0193);width:239.4px;overflow:hidden;">Non alloué</div>
<div style="left:107px;top:445px;width:182px;height:1px;background:#fff;"></div>
<div style="left:107px;top:445px;width:1px;height:88px;background:#fff;"></div>
<div style="left:108px;top:446px;width:180px;height:13px;background:#000080;"></div>
<div style="left:288px;top:445px;width:1px;height:15px;background:#a0a0a0;"></div>
<div style="left:108px;top:459px;width:181px;height:1px;background:#a0a0a0;"></div>
<div style="left:289px;top:445px;width:1px;height:89px;background:#a0a0a0;"></div>
<div style="left:107px;top:533px;width:183px;height:1px;background:#a0a0a0;"></div>
<div style="left:111px;top:462px;width:175px;height:68px;background:#fff;"></div>
<div style="left:111px;top:462px;width:174px;height:1px;background:#a0a0a0;"></div>
<div style="left:111px;top:462px;width:1px;height:67px;background:#a0a0a0;"></div>
<div class="t" style="left:115.11px;top:480.90px;color:#000;transform-origin:0 0;transform:scaleX(0.9821);width:170.1px;overflow:hidden;">100 Mo</div>
<div class="t" style="left:115.12px;top:495.90px;color:#000;transform-origin:0 0;transform:scaleX(0.9588);width:174.2px;overflow:hidden;">Sain (Partition du système EFI)</div>
<div style="left:290px;top:445px;width:521px;height:1px;background:#fff;"></div>
<div style="left:290px;top:445px;width:1px;height:88px;background:#fff;"></div>
<div style="left:291px;top:446px;width:519px;height:13px;background:#000080;"></div>
<div style="left:810px;top:445px;width:1px;height:15px;background:#a0a0a0;"></div>
<div style="left:291px;top:459px;width:520px;height:1px;background:#a0a0a0;"></div>
<div style="left:811px;top:445px;width:1px;height:89px;background:#a0a0a0;"></div>
<div style="left:290px;top:533px;width:522px;height:1px;background:#a0a0a0;"></div>
<div style="left:294px;top:462px;width:514px;height:68px;background:#fff;"></div>
<div style="left:294px;top:462px;width:513px;height:1px;background:#a0a0a0;"></div>
<div style="left:294px;top:462px;width:1px;height:67px;background:#a0a0a0;"></div>
<div class="t" style="left:298.02px;top:465.90px;color:#000;font-weight:bold;transform-origin:0 0;transform:scaleX(0.9663);width:523.7px;overflow:hidden;">Stockage&nbsp; (D:)</div>
<div class="t" style="left:298.05px;top:480.90px;color:#000;transform-origin:0 0;transform:scaleX(0.8967);width:564.3px;overflow:hidden;">475,90 Go NTFS</div>
<div class="t" style="left:298.02px;top:495.90px;color:#000;transform-origin:0 0;transform:scaleX(0.9668);width:523.4px;overflow:hidden;">Sain (Partition de données de base)</div>
<div style="left:812px;top:445px;width:268px;height:1px;background:#fff;"></div>
<div style="left:812px;top:445px;width:1px;height:88px;background:#fff;"></div>
<div style="left:813px;top:446px;width:266px;height:13px;background:#000080;"></div>
<div style="left:1079px;top:445px;width:1px;height:15px;background:#a0a0a0;"></div>
<div style="left:813px;top:459px;width:267px;height:1px;background:#a0a0a0;"></div>
<div style="left:1080px;top:445px;width:1px;height:89px;background:#a0a0a0;"></div>
<div style="left:812px;top:533px;width:269px;height:1px;background:#a0a0a0;"></div>
<div style="left:816px;top:462px;width:261px;height:68px;background:#fff;"></div>
<div style="left:816px;top:462px;width:260px;height:1px;background:#a0a0a0;"></div>
<div style="left:816px;top:462px;width:1px;height:67px;background:#a0a0a0;"></div>
<div class="t" style="left:819.64px;top:480.90px;color:#000;transform-origin:0 0;transform:scaleX(0.9270);width:272.9px;overflow:hidden;">831 Mo NTFS</div>
<div class="t" style="left:819.61px;top:495.90px;color:#000;transform-origin:0 0;transform:scaleX(0.9873);width:256.3px;overflow:hidden;">Sain (Partition de récupération)</div>
<div style="left:3px;top:764px;width:1130px;height:20px;background:#f0f0f0;"></div>
<div style="left:3px;top:764px;width:1130px;height:1px;background:#fff;"></div>
<div style="left:3px;top:764px;width:1px;height:20px;background:#fff;"></div>
<div style="left:3px;top:783px;width:1130px;height:1px;background:#a0a0a0;"></div>
<div style="left:1132px;top:764px;width:1px;height:20px;background:#a0a0a0;"></div>
<div style="left:8px;top:767px;width:11px;height:13px;background:#a0a0a0;"></div>
<div style="left:9px;top:768px;width:11px;height:13px;background:#fff;"></div>
<div style="left:9px;top:768px;width:10px;height:12px;background:#000;"></div>
<div style="left:87px;top:767px;width:11px;height:13px;background:#a0a0a0;"></div>
<div style="left:88px;top:768px;width:11px;height:13px;background:#fff;"></div>
<div style="left:88px;top:768px;width:10px;height:12px;background:#000080;"></div>
<div class="t" style="left:23.88px;top:766.70px;color:#000;transform-origin:0 0;transform:scaleX(1.0232);">Non alloué</div>
<div class="t" style="left:102.26px;top:766.70px;color:#000;transform-origin:0 0;transform:scaleX(1.0289);">Partition principale</div>
<div style="left:1px;top:784px;width:1134px;height:1px;background:#fff;"></div>
<div style="left:1px;top:785px;width:1134px;height:1px;background:#fff;"></div>
<div style="left:1px;top:786px;width:1134px;height:1px;background:#d9d9d9;"></div>
<div style="left:1px;top:787px;width:1134px;height:22px;background:#f0f0f0;"></div>
<div style="left:1047px;top:788px;width:1px;height:20px;background:#d5d5d5;"></div>
<div style="left:1132px;top:788px;width:1px;height:20px;background:#d5d5d5;"></div>
<div style="left:1px;top:786px;width:1px;height:23px;background:#fff;"></div>
</body></html>
